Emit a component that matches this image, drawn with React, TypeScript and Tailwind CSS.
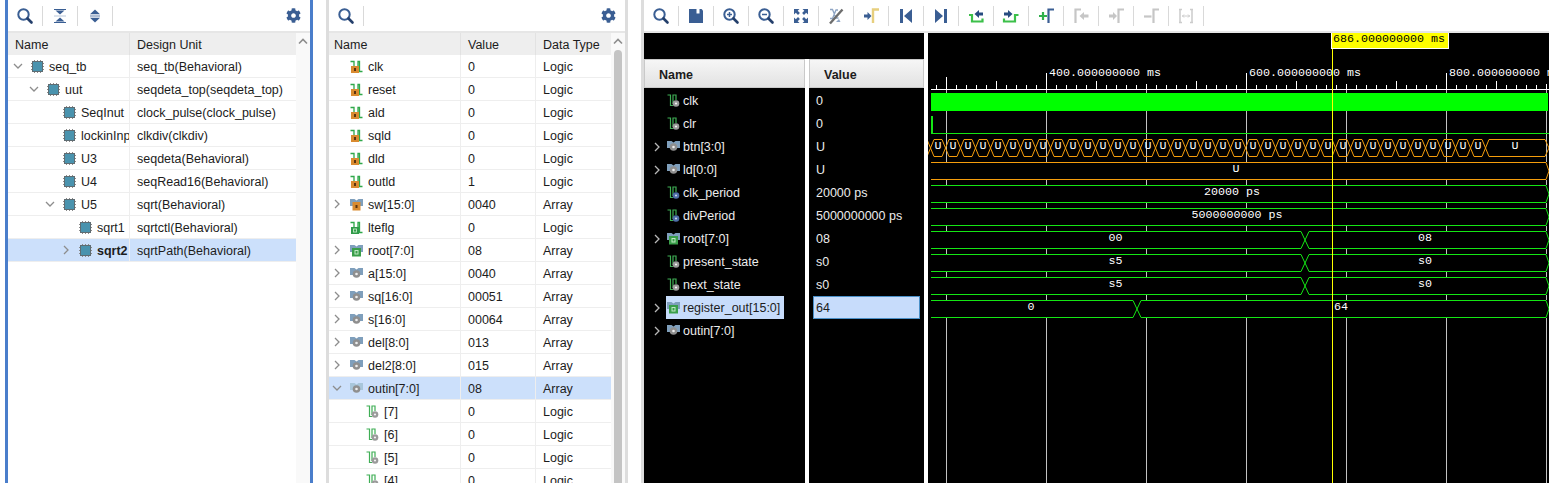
import React from "react";
import { FaCog } from "react-icons/fa";

const BLUE = "#3a5e93";
const OFF = "#c6c6c6";
const GREEN = "#14e614";
const ORANGE = "#f59d0c";

function Search({ sign }: { sign?: "+" | "-" }) {
  return (
    <svg width="18" height="18" viewBox="0 0 18 18" fill="none">
      <circle cx="7.5" cy="7.5" r="5.2" stroke={BLUE} strokeWidth="2" />
      <path d="M11.5 11.5L15.5 15.5" stroke="#243f6b" strokeWidth="2.6" strokeLinecap="round" />
      {sign && <path d={sign === "+" ? "M5 7.5h5M7.5 5v5" : "M5 7.5h5"} stroke={BLUE} strokeWidth="1.5" />}
    </svg>
  );
}

function Collapse() {
  return (
    <svg width="18" height="18" viewBox="0 0 18 18">
      <path d="M3 2h12v1H3z" fill={BLUE} />
      <path d="M4.500 3.500h9L9 7.500z" fill={BLUE} />
      <path d="M3 8.500h12v1H3z" fill="#b9c6d9" />
      <path d="M9 10.500l4.500 4h-9z" fill={BLUE} />
      <path d="M3 15h12v1H3z" fill={BLUE} />
    </svg>
  );
}

function Expand() {
  return (
    <svg width="18" height="18" viewBox="0 0 18 18">
      <path d="M9 2.500l5 4.800H4z" fill={BLUE} />
      <path d="M4 8.300h10v1.400H4z" fill="#8fa3c2" />
      <path d="M4 10.700h10l-5 4.800z" fill={BLUE} />
    </svg>
  );
}

function Save() {
  return (
    <svg width="18" height="18" viewBox="0 0 18 18">
      <path d="M2 2h12.500L16 3.500V16H2z" fill={BLUE} />
      <path d="M9.500 2h3v4.500h-3z" fill="#fff" />
    </svg>
  );
}

function Fit() {
  return (
    <svg width="18" height="18" viewBox="0 0 18 18" fill={BLUE}>
      <path d="M2 2h5.500L5.700 3.800 7.900 6 6 7.900 3.800 5.700 2 7.500z" />
      <path d="M16 2v5.500l-1.800-1.800L12 7.900 10.100 6l2.200-2.200L10.500 2z" />
      <path d="M2 16v-5.500l1.800 1.800L6 10.100 7.900 12l-2.200 2.200L7.500 16z" />
      <path d="M16 16h-5.500l1.800-1.800L10.100 12l1.900-1.900 2.200 2.200 1.800-1.800z" />
    </svg>
  );
}

function Snap() {
  return (
    <svg width="18" height="18" viewBox="0 0 18 18" fill="none">
      <path d="M3 2.500h2.500L9 11h2.500M3 11.500h2.500L9 3h2" stroke="#8fa5c4" strokeWidth="1.300" />
      <path d="M3 16.500L15.500 2.500" stroke="#6d6d6d" strokeWidth="2.400" />
      <path d="M9 15l3-3 1.500 3z" fill="#8fa5c4" />
    </svg>
  );
}

function Goto() {
  return (
    <svg width="18" height="18" viewBox="0 0 18 18">
      <path d="M10 16V2.500h6" fill="none" stroke="#e7cf7e" strokeWidth="2.400" transform="translate(1 0)" />
      <path d="M2 7.500h3.500V5l4 4-4 4v-2.500H2z" fill={BLUE} />
    </svg>
  );
}

function AddMarker() {
  return (
    <svg width="18" height="18" viewBox="0 0 18 18" fill="none">
      <path d="M11.500 16V2.500H17" stroke={BLUE} strokeWidth="2.200" />
      <path d="M2 9h8M6 5v8" stroke="#2fb04b" strokeWidth="2.200" />
    </svg>
  );
}

function PrevMarker() {
  return (
    <svg width="18" height="18" viewBox="0 0 18 18">
      <path d="M3.500 16V2.500H9" fill="none" stroke={OFF} strokeWidth="2.200" />
      <path d="M16.500 7.500H12V5L7.500 9l4.500 4v-2.500h4.500z" fill={OFF} />
    </svg>
  );
}

function NextMarker() {
  return (
    <svg width="18" height="18" viewBox="0 0 18 18">
      <path d="M11.500 16V2.500H17" fill="none" stroke={OFF} strokeWidth="2.200" />
      <path d="M2 7.500h4V5l4 4-4 4v-2.500H2z" fill={OFF} />
    </svg>
  );
}

function RemoveMarker() {
  return (
    <svg width="18" height="18" viewBox="0 0 18 18" fill="none">
      <path d="M11.500 16V2.500H17" stroke={OFF} strokeWidth="2.200" />
      <path d="M2 9.500h7.500" stroke={OFF} strokeWidth="2.200" />
    </svg>
  );
}

function Prev() {
  return (
    <svg width="18" height="18" viewBox="0 0 18 18" fill={BLUE}>
      <path d="M3 2h3v14H3zM15 2v14L7 9z" />
    </svg>
  );
}

function Next() {
  return (
    <svg width="18" height="18" viewBox="0 0 18 18" fill={BLUE}>
      <path d="M12 2h3v14h-3zM3 2v14l8-7z" />
    </svg>
  );
}

function SwapLeft() {
  return (
    <svg width="18" height="18" viewBox="0 0 18 18" fill="none">
      <path d="M2 8h3v6.500h10.500V11.500" stroke="#3cc04a" strokeWidth="2.200" />
      <path d="M7.500 7l4.500-4v2.500h4v3h-4V11z" fill="#274b80" />
    </svg>
  );
}

function SwapRight() {
  return (
    <svg width="18" height="18" viewBox="0 0 18 18" fill="none">
      <path d="M2 11.500v3h11V8h3.500" stroke="#3cc04a" strokeWidth="2.200" />
      <path d="M10.500 7L6 3v2.500H2v3h4V11z" fill="#274b80" />
    </svg>
  );
}

function Span() {
  return (
    <svg width="18" height="18" viewBox="0 0 18 18" fill="none" stroke="#cccccc">
      <path d="M3 2.500v13M15 2.500v13M2 2.500h3M2 15.500h3M13 2.500h3M13 15.500h3" strokeWidth="1.500" />
      <path d="M5 9h8M7 7.500L5.500 9 7 10.500M11 7.500L12.500 9 11 10.500" strokeWidth="1" />
    </svg>
  );
}

function Sep() {
  return <div className="h-5 w-px bg-[#d9d9d9]" />;
}

function Tool({ children }: { children: React.ReactNode }) {
  return <div className="flex h-5 w-[34px] items-center justify-center">{children}</div>;
}

function ToolGear() {
  return <FaCog size={15} color={BLUE} />;
}

function Chip() {
  return (
    <svg width="13" height="13" viewBox="0 0 13 13" className="shrink-0" shapeRendering="crispEdges">
      <path d="M0 3.500h13M0 6.500h13M0 9.500h13M3.500 0v13M6.500 0v13M9.500 0v13" stroke="#8a8a8a" strokeWidth="1" />
      <rect x="1.500" y="1.500" width="10" height="10" fill="#4a93ae" stroke="#5f6c72" strokeWidth="1" />
    </svg>
  );
}

function Chevron({ open, dark }: { open: boolean; dark?: boolean }) {
  const c = dark ? "#b8b8b8" : "#8d8d8d";
  return (
    <svg width="10" height="10" viewBox="0 0 10 10" fill="none" className="shrink-0">
      <path d={open ? "M1 3l4 4 4-4" : "M3 1l4 4-4 4"} stroke={c} strokeWidth="1.300" />
    </svg>
  );
}

function PortIcon({ orange }: { orange?: boolean }) {
  return (
    <svg width="13" height="13" viewBox="0 0 13 13" fill="none" className="shrink-0">
      <path d="M0.500 1.500H4V7M8 7V1.500h1.500V11.500H12.500" stroke="#2fa84a" strokeWidth="1.300" />
      {orange ? (
        <>
          <rect x="1" y="6" width="8" height="7" fill="#d98b30" />
          <rect x="4" y="8" width="2" height="3" fill="#5a3410" />
        </>
      ) : (
        <>
          <rect x="1" y="6" width="8" height="7" fill="#2f9a48" />
          <rect x="3.500" y="8" width="3" height="3" fill="none" stroke="#bfe8c4" strokeWidth="0.900" />
        </>
      )}
    </svg>
  );
}

function SigIcon({ dot = "#9a9a9a" }: { dot?: string }) {
  return (
    <svg width="13" height="13" viewBox="0 0 13 13" fill="none" className="shrink-0">
      <path d="M0.500 1H3.500V11.500H6M6 10V1H9V6" stroke="#3fae55" strokeWidth="1.200" />
      <circle cx="9" cy="9.500" r="3.300" fill={dot} />
      <circle cx="9" cy="9.500" r="1.100" fill={dot === "#9a9a9a" ? "#f2f2f2" : "#c8d2e6"} />
    </svg>
  );
}

function BusIcon({ kind = "grey" }: { kind?: "grey" | "green" | "orange" | "light" }) {
  const top = kind === "light" ? "#a8c6da" : "#7f9fbc";
  return (
    <svg width="13" height="13" viewBox="0 0 13 13" className="shrink-0">
      <path d="M0 1h4.500l2 1.500 2-1.500H13v7H0z" fill={top} />
      {kind === "grey" || kind === "light" ? (
        <>
          <circle cx="6.500" cy="7" r="3.800" fill="#8f8f8f" />
          <circle cx="6.500" cy="7" r="1.300" fill="#eeeeee" />
        </>
      ) : kind === "green" ? (
        <>
          <rect x="2" y="4" width="9" height="8.500" fill="#3a9e4a" />
          <rect x="5" y="6.500" width="3" height="3.500" fill="none" stroke="#bfe8c4" strokeWidth="1" />
        </>
      ) : (
        <>
          <rect x="2.500" y="4" width="8" height="8.500" fill="#d98b30" />
          <rect x="5.500" y="7" width="2" height="3" fill="#5a3410" />
        </>
      )}
    </svg>
  );
}

const UI = "font-['Liberation_Sans',Arial,sans-serif] text-[12.5px]";

function TreeRow({
  name,
  unit,
  depth,
  chev,
  sel,
}: {
  name: string;
  unit: string;
  depth: number;
  chev?: "open" | "closed";
  sel?: boolean;
}) {
  return (
    <div className={`flex h-[23px] border-b border-[#eeeeee] text-[#1c1c1c] ${sel ? "bg-[#cce0fb]" : "bg-white"}`}>
      <div className="flex w-[122px] items-center overflow-hidden border-r border-[#eeeeee]" style={{ paddingLeft: 5 + depth * 16 }}>
        <div className="flex w-[16px] shrink-0 items-center justify-start">{chev && <Chevron open={chev === "open"} />}</div>
        <div className="ml-[2px] flex"><Chip /></div>
        <span className={`ml-[5px] whitespace-nowrap pt-[2px] ${sel ? "font-bold" : ""}`}>{name}</span>
      </div>
      <div className="flex-1 pl-[7px] leading-[24px] whitespace-nowrap">{unit}</div>
    </div>
  );
}

function Panel1() {
  const rows: [string, string, number, ("open" | "closed" | undefined)?, boolean?][] = [
    ["seq_tb", "seq_tb(Behavioral)", 0, "open"],
    ["uut", "seqdeta_top(seqdeta_top)", 1, "open"],
    ["SeqInut", "clock_pulse(clock_pulse)", 2],
    ["lockinInp", "clkdiv(clkdiv)", 2],
    ["U3", "seqdeta(Behavioral)", 2],
    ["U4", "seqRead16(Behavioral)", 2],
    ["U5", "sqrt(Behavioral)", 2, "open"],
    ["sqrt1", "sqrtctl(Behavioral)", 3],
    ["sqrt2", "sqrtPath(Behavioral)", 3, "closed", true],
  ];
  return (
    <div className="ml-[5px] flex h-[483px] w-[308px] shrink-0 flex-col border-x-[3px] border-[#4a7ecb] bg-white">
      <div className="flex h-[31px] shrink-0 items-center pr-[9px]">
        <Tool><Search /></Tool>
        <Sep />
        <Tool><Collapse /></Tool>
        <Sep />
        <Tool><Expand /></Tool>
        <Sep />
        <div className="ml-auto flex"><ToolGear /></div>
      </div>
      <div className="h-[2px] shrink-0 bg-[#e6e6e6]" />
      <div className="flex flex-1">
        <div className="w-[288px] shrink-0">
          <div className="flex h-[22px] bg-[#eeeeee] text-[#1c1c1c]">
            <div className="w-[122px] border-r border-[#e2e2e2] pl-[7px] leading-[24px]">Name</div>
            <div className="flex-1 pl-[7px] leading-[24px]">Design Unit</div>
          </div>
          {rows.map((r) => (
            <TreeRow key={r[0]} name={r[0]} unit={r[1]} depth={r[2]} chev={r[3]} sel={r[4]} />
          ))}
        </div>
        <Scroll />
      </div>
    </div>
  );
}

function Scroll({ thumb }: { thumb?: boolean }) {
  return (
    <div className="flex flex-1 flex-col items-center bg-[#f9f9f9] pt-[5px]">
      <svg width="10" height="7" viewBox="0 0 10 7" fill="none">
        <path d="M1 5.500l4-4 4 4" stroke="#8d8d8d" strokeWidth="1.600" />
      </svg>
      {thumb && <div className="mt-[5px] w-[8px] flex-1 rounded-t-[4px] bg-[#c4c4c4]" />}
    </div>
  );
}

type SigKind = "port" | "wire" | "sw" | "root" | "bus" | "light" | "bit";

function SigRow({
  name,
  value,
  type,
  kind,
  chev,
  sel,
  child,
}: {
  name: string;
  value: string;
  type: string;
  kind: SigKind;
  chev?: "open" | "closed";
  sel?: boolean;
  child?: boolean;
}) {
  return (
    <div className={`flex h-[23px] shrink-0 border-b border-[#eeeeee] text-[#1c1c1c] ${sel ? "bg-[#cce0fb]" : "bg-white"}`}>
      <div className="flex w-[132px] items-center border-r border-[#eeeeee] pl-[3px]">
        <div className="flex w-[16px] shrink-0 items-center">{chev && <Chevron open={chev === "open"} />}</div>
        <div className={`flex ${child ? "ml-[18px]" : "ml-[2px]"}`}>
          {kind === "port" && <PortIcon orange />}
          {kind === "wire" && <PortIcon />}
          {kind === "sw" && <BusIcon kind="orange" />}
          {kind === "root" && <BusIcon kind="green" />}
          {kind === "bus" && <BusIcon />}
          {kind === "light" && <BusIcon kind="light" />}
          {kind === "bit" && <SigIcon />}
        </div>
        <span className="ml-[5px] whitespace-nowrap pt-[2px]">{name}</span>
      </div>
      <div className="w-[75px] border-r border-[#eeeeee] pl-[7px] leading-[24px]">{value}</div>
      <div className="flex-1 pl-[7px] leading-[24px]">{type}</div>
    </div>
  );
}

function Panel2() {
  const rows: [string, string, string, SigKind, ("open" | "closed" | undefined)?][] = [
    ["clk", "0", "Logic", "port"],
    ["reset", "0", "Logic", "port"],
    ["ald", "0", "Logic", "port"],
    ["sqld", "0", "Logic", "port"],
    ["dld", "0", "Logic", "port"],
    ["outld", "1", "Logic", "port"],
    ["sw[15:0]", "0040", "Array", "sw", "closed"],
    ["lteflg", "0", "Logic", "wire"],
    ["root[7:0]", "08", "Array", "root", "closed"],
    ["a[15:0]", "0040", "Array", "bus", "closed"],
    ["sq[16:0]", "00051", "Array", "bus", "closed"],
    ["s[16:0]", "00064", "Array", "bus", "closed"],
    ["del[8:0]", "013", "Array", "bus", "closed"],
    ["del2[8:0]", "015", "Array", "bus", "closed"],
  ];
  return (
    <div className="ml-[13px] flex h-[483px] w-[302px] shrink-0 flex-col overflow-hidden border-x-[3px] border-[#dddddd] bg-white">
      <div className="flex h-[31px] shrink-0 items-center pr-[9px]">
        <Tool><Search /></Tool>
        <Sep />
        <div className="ml-auto flex"><ToolGear /></div>
      </div>
      <div className="h-[2px] shrink-0 bg-[#e6e6e6]" />
      <div className="flex min-h-0 flex-1">
        <div className="flex w-[282px] shrink-0 flex-col overflow-hidden">
          <div className="flex h-[22px] shrink-0 bg-[#eeeeee] text-[#1c1c1c]">
            <div className="w-[132px] border-r border-[#e2e2e2] pl-[5px] leading-[24px]">Name</div>
            <div className="w-[75px] border-r border-[#e2e2e2] pl-[7px] leading-[24px]">Value</div>
            <div className="flex-1 pl-[7px] leading-[24px]">Data Type</div>
          </div>
          {rows.map((r) => (
            <SigRow key={r[0]} name={r[0]} value={r[1]} type={r[2]} kind={r[3]} chev={r[4]} />
          ))}
          <SigRow name="outin[7:0]" value="08" type="Array" kind="light" chev="open" sel />
          <SigRow name="[7]" value="0" type="Logic" kind="bit" child />
          <SigRow name="[6]" value="0" type="Logic" kind="bit" child />
          <SigRow name="[5]" value="0" type="Logic" kind="bit" child />
          <SigRow name="[4]" value="0" type="Logic" kind="bit" child />
        </div>
        <Scroll thumb />
      </div>
    </div>
  );
}

const busHexes = Array.from({ length: 38 }, (_, k) => 930.5 + 15 * k);

function Bus({ y, segs, color = GREEN }: { y: number; segs: { t: string; x: number }[]; color?: string }) {
  return (
    <g>
      <rect x="931" y={y} width="618" height="18" fill="#000" />
      <path d={`M931 ${y + 0.5}H1546L1549 ${y + 9}L1546 ${y + 17.5}H931`} stroke={color} fill="none" />
      {segs.map((s) => (
        <text key={s.t + s.x} x={s.x} y={y + 10} fill="#fff" textAnchor="middle">{s.t}</text>
      ))}
    </g>
  );
}

function BusX({ y, at }: { y: number; at: number }) {
  return (
    <g>
      <rect x={at - 4} y={y} width="8" height="18" fill="#000" />
      <path d={`M${at - 4} ${y + 0.5}L${at + 4} ${y + 17.5}M${at - 4} ${y + 17.5}L${at + 4} ${y + 0.5}`} stroke={GREEN} fill="none" />
    </g>
  );
}

function Wave() {
  const ticks = Array.from({ length: 62 }, (_, i) => 936 + i * 10);
  const grid = [946, 1046, 1146, 1246, 1346, 1446, 1546];
  const major: Record<number, number> = { 946: 77, 1046: 73, 1146: 84, 1246: 73, 1346: 84, 1446: 73, 1546: 84 };
  return (
    <svg
      width="621"
      height="450"
      viewBox="928 33 621 450"
      className="block shrink-0 bg-black"
      fontFamily="'Liberation Mono', monospace"
      fontSize="11.67"
    >
      {ticks.map((x) => {
        const isMid = (x - 946) % 100 === 50;
        const top = major[x] ?? (isMid ? 81 : 85);
        return <path key={x} d={`M${x + 0.5} ${top}V89`} stroke="#fff" shapeRendering="crispEdges" />;
      })}
      <path d="M931 89.500H1549" stroke="#fff" shapeRendering="crispEdges" />
      {grid.map((x) => (
        <path key={x} d={`M${x + 0.5} 90V483`} stroke="#c2c2c2" shapeRendering="crispEdges" />
      ))}
      <text x="1049" y="76" fill="#fff">400.000000000 ms</text>
      <text x="1249" y="76" fill="#fff">600.000000000 ms</text>
      <text x="1449" y="76" fill="#fff">800.000000000 ms</text>

      <rect x="931" y="93" width="617" height="18" fill="#00ff00" />
      <path d="M931.500 116V133.500H1549" stroke={GREEN} fill="none" strokeWidth="1" shapeRendering="crispEdges" />
      <path d="M932 116V133" stroke={GREEN} strokeWidth="2" />

      <g stroke={ORANGE} fill="none">
        {busHexes.map((c, i) => (
          <g key={c}>
            <path d={`M${c - 3.5} 139.500L${c + 3.5} 156.500M${c - 3.5} 156.500L${c + 3.5} 139.500`} />
            {i < 37 && <path d={`M${c + 3.5} 139.500H${c + 11.5}M${c + 3.5} 156.500H${c + 11.5}`} shapeRendering="crispEdges" />}
          </g>
        ))}
        <path d="M1489 139.500H1545L1549 148L1545 156.500H1489" />
      </g>
      {busHexes.slice(0, 37).map((c) => (
        <text key={c} x={c + 7.5} y="149" fill="#fff" textAnchor="middle">U</text>
      ))}
      <text x="1515" y="149" fill="#fff" textAnchor="middle">U</text>

      <Bus y={162} color={ORANGE} segs={[{ t: "U", x: 1236 }]} />
      <Bus y={185} segs={[{ t: "20000 ps", x: 1232 }]} />
      <Bus y={208} segs={[{ t: "5000000000 ps", x: 1237 }]} />
      <Bus y={231} segs={[{ t: "00", x: 1115.5 }, { t: "08", x: 1425 }]} />
      <BusX y={231} at={1305} />
      <Bus y={254} segs={[{ t: "s5", x: 1115.5 }, { t: "s0", x: 1425 }]} />
      <BusX y={254} at={1305} />
      <Bus y={277} segs={[{ t: "s5", x: 1115.5 }, { t: "s0", x: 1425 }]} />
      <BusX y={277} at={1305} />
      <Bus y={300} segs={[{ t: "0", x: 1031 }, { t: "64", x: 1341 }]} />
      <BusX y={300} at={1137} />

      <path d="M1332.500 49V483" stroke="#ffff00" shapeRendering="crispEdges" />
      <rect x="1331.500" y="32.500" width="117" height="16" fill="#ffff00" stroke="#fff" shapeRendering="crispEdges" />
      <text x="1333" y="42" fill="#000">686.000000000 ms</text>
    </svg>
  );
}

function NameRow({ name, kind, chev, sel }: { name: string; kind: "sig" | "int" | "bus" | "root"; chev?: boolean; sel?: boolean }) {
  return (
    <div className="flex h-[23px] items-center pl-[8px]">
      <div className="flex w-[14px] shrink-0 items-center">{chev && <Chevron open={false} dark />}</div>
      <div className={`flex h-[23px] items-center pl-[1px] pr-[4px] ${sel ? "bg-[#c7dcfb] text-[#1c1c1c]" : "text-[#ececec]"}`}>
        {kind === "sig" && <SigIcon />}
        {kind === "int" && <SigIcon dot="#4d6ea8" />}
        {kind === "bus" && <BusIcon />}
        {kind === "root" && <BusIcon kind="green" />}
        <span className="ml-[3px] whitespace-nowrap pt-[2px]">{name}</span>
      </div>
    </div>
  );
}

function Panel3() {
  const names: [string, "sig" | "int" | "bus" | "root", boolean, string][] = [
    ["clk", "sig", false, "0"],
    ["clr", "sig", false, "0"],
    ["btn[3:0]", "bus", true, "U"],
    ["ld[0:0]", "bus", true, "U"],
    ["clk_period", "int", false, "20000 ps"],
    ["divPeriod", "int", false, "5000000000 ps"],
    ["root[7:0]", "root", true, "08"],
    ["present_state", "sig", false, "s0"],
    ["next_state", "sig", false, "s0"],
    ["register_out[15:0]", "root", true, "64"],
    ["outin[7:0]", "bus", true, ""],
  ];
  const header =
    "h-[29px] shrink-0 border border-[#c9c9c9] bg-gradient-to-b from-[#f6f6f6] to-[#e2e2e2] pl-[14px] font-bold leading-[30px] text-[#1c1c1c]";
  return (
    <div className="ml-[13px] flex h-[483px] flex-1 flex-col overflow-hidden border-l-[3px] border-[#dddddd] bg-white">
      <div className="flex h-[31px] shrink-0 items-center">
        <Tool><Search /></Tool><Sep />
        <Tool><Save /></Tool><Sep />
        <Tool><Search sign="+" /></Tool><Sep />
        <Tool><Search sign="-" /></Tool><Sep />
        <Tool><Fit /></Tool><Sep />
        <Tool><Snap /></Tool><Sep />
        <Tool><Goto /></Tool><Sep />
        <Tool><Prev /></Tool><Sep />
        <Tool><Next /></Tool><Sep />
        <Tool><SwapLeft /></Tool><Sep />
        <Tool><SwapRight /></Tool><Sep />
        <Tool><AddMarker /></Tool><Sep />
        <Tool><PrevMarker /></Tool><Sep />
        <Tool><NextMarker /></Tool><Sep />
        <Tool><RemoveMarker /></Tool><Sep />
        <Tool><Span /></Tool><Sep />
      </div>
      <div className="h-[2px] shrink-0 bg-[#e6e6e6]" />
      <div className="flex min-h-0 flex-1">
        <div className="flex w-[280px] shrink-0 flex-col">
          <div className="h-[26px] shrink-0 bg-black" />
          <div className="flex min-h-0 flex-1 gap-[4px]">
            <div className="flex w-[161px] shrink-0 flex-col bg-black">
              <div className={header}>Name</div>
              <div className="pt-[1px]">
                {names.map((n) => (
                  <NameRow key={n[0]} name={n[0]} kind={n[1]} chev={n[2]} sel={n[0].startsWith("register")} />
                ))}
              </div>
            </div>
            <div className="flex w-[115px] shrink-0 flex-col bg-black">
              <div className={header}>Value</div>
              <div className="px-[4px] pt-[1px]">
                {names.map((n) =>
                  n[0].startsWith("register") ? (
                    <div key={n[0]} className="flex h-[23px] items-center border border-[#4a90c8] bg-[#c7dcfb] pl-[2px] pt-[2px] text-[#1c1c1c]">{n[3]}</div>
                  ) : (
                    <div key={n[0]} className="flex h-[23px] items-center pl-[3px] pt-[2px] text-[#ececec]">{n[3]}</div>
                  ),
                )}
              </div>
            </div>
          </div>
        </div>
        <div className="w-[4px] shrink-0 bg-white" />
        <Wave />
      </div>
    </div>
  );
}

export default function App() {
  return (
    <div className={`flex h-[483px] w-[1549px] overflow-hidden bg-white ${UI}`}>
      <Panel1 />
      <Panel2 />
      <Panel3 />
    </div>
  );
}
